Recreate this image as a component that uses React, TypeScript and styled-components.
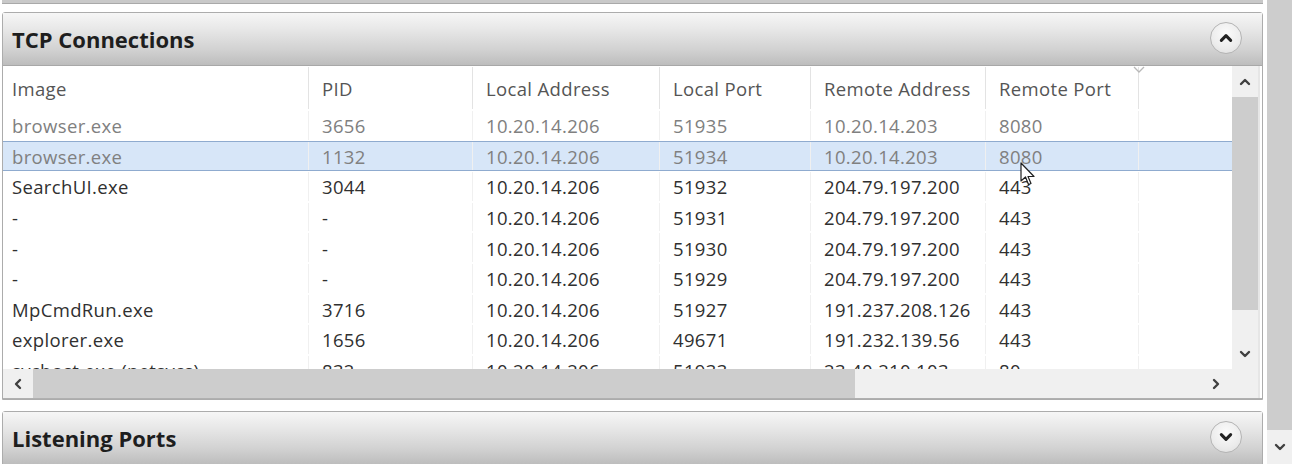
import React, { FC } from 'react';
import styled, { createGlobalStyle } from 'styled-components';

const GlobalStyle = createGlobalStyle`
  html, body {
    margin: 0;
    padding: 0;
    background: #ffffff;
  }
  body {
    font-family: "Open Sans", "Noto Sans", "Liberation Sans", sans-serif;
    overflow: hidden;
  }
`;

type Row = {
  image: string;
  pid: string;
  localAddress: string;
  localPort: string;
  remoteAddress: string;
  remotePort: string;
  dim?: boolean;
  selected?: boolean;
};

const columns = ['Image', 'PID', 'Local Address', 'Local Port', 'Remote Address', 'Remote Port'];

const rows: Row[] = [
  { image: 'browser.exe', pid: '3656', localAddress: '10.20.14.206', localPort: '51935', remoteAddress: '10.20.14.203', remotePort: '8080', dim: true },
  { image: 'browser.exe', pid: '1132', localAddress: '10.20.14.206', localPort: '51934', remoteAddress: '10.20.14.203', remotePort: '8080', dim: true, selected: true },
  { image: 'SearchUI.exe', pid: '3044', localAddress: '10.20.14.206', localPort: '51932', remoteAddress: '204.79.197.200', remotePort: '443' },
  { image: '-', pid: '-', localAddress: '10.20.14.206', localPort: '51931', remoteAddress: '204.79.197.200', remotePort: '443' },
  { image: '-', pid: '-', localAddress: '10.20.14.206', localPort: '51930', remoteAddress: '204.79.197.200', remotePort: '443' },
  { image: '-', pid: '-', localAddress: '10.20.14.206', localPort: '51929', remoteAddress: '204.79.197.200', remotePort: '443' },
  { image: 'MpCmdRun.exe', pid: '3716', localAddress: '10.20.14.206', localPort: '51927', remoteAddress: '191.237.208.126', remotePort: '443' },
  { image: 'explorer.exe', pid: '1656', localAddress: '10.20.14.206', localPort: '49671', remoteAddress: '191.232.139.56', remotePort: '443' },
  { image: 'svchost.exe (netsvcs)', pid: '832', localAddress: '10.20.14.206', localPort: '51933', remoteAddress: '23.40.210.103', remotePort: '80' },
];

const GRID = '306px 164px 187px 151px 175px 153px 1fr';

const Page = styled.div`
  display: flex;
  width: 1292px;
  height: 464px;
  overflow: hidden;
  background: #ffffff;
`;

const Main = styled.div`
  display: flex;
  flex-direction: column;
  width: 1263px;
  padding-left: 2px;
  box-sizing: border-box;
`;

const PrevPanelEdge = styled.div`
  height: 3px;
  background: #c9c9c9;
  border-bottom: 1px solid #a9a9a9;
  flex-shrink: 0;
`;

const Panel = styled.section<{ $gap: number }>`
  margin-top: ${(p) => p.$gap}px;
  border: 1px solid #acacac;
  border-radius: 3px 3px 0 0;
  display: flex;
  flex-direction: column;
  flex-shrink: 0;
  background: #ffffff;
`;

const PanelHeader = styled.div`
  height: 53px;
  display: flex;
  align-items: center;
  justify-content: space-between;
  padding: 0 20px 0 9px;
  background: linear-gradient(#f6f6f6 0%, #e8e8e8 30%, #d2d2d2 70%, #bdbdbd 100%);
  border-bottom: 1px solid #a8a8a8;
  box-sizing: border-box;
`;

const Title = styled.h2`
  margin: 0;
  font-size: 22px;
  font-weight: 700;
  color: #1e1e1e;
  letter-spacing: 0;
`;

const CircleButton = styled.button`
  width: 32px;
  height: 32px;
  border-radius: 50%;
  border: 1px solid #b4b4b4;
  background: radial-gradient(circle at 50% 35%, #fbfbfb 0%, #ececec 60%, #dcdcdc 100%);
  display: flex;
  align-items: center;
  justify-content: center;
  padding: 0;
  margin-top: -2px;
`;

const TableArea = styled.div`
  display: grid;
  grid-template-columns: 1229px 28px;
  grid-template-rows: 303px 29px;
  border-bottom: 1px solid #b0b0b0;
`;

const Viewport = styled.div`
  position: relative;
  overflow: hidden;
`;

const GridRow = styled.div<{ $selected?: boolean; $header?: boolean }>`
  display: grid;
  grid-template-columns: ${GRID};
  height: ${(p) => (p.$header ? '44px' : '30.6px')};
  box-sizing: border-box;
  background: ${(p) => (p.$selected ? '#d7e6f8' : 'transparent')};
  border-top: 1px solid ${(p) => (p.$selected ? '#8fabcf' : 'transparent')};
  border-bottom: 1px solid ${(p) => (p.$selected ? '#8fabcf' : 'transparent')};
`;

const Cell = styled.div<{ $dim?: boolean; $header?: boolean }>`
  display: flex;
  align-items: center;
  padding-left: 13px;
  font-size: 18.5px;
  letter-spacing: 0.35px;
  white-space: nowrap;
  overflow: hidden;
  color: ${(p) => (p.$header ? '#555555' : p.$dim ? '#808080' : '#303030')};
  border-right: 1px solid ${(p) => (p.$header ? '#e3e3e3' : '#f0f0f0')};
  padding-top: ${(p) => (p.$header ? '0' : '1px')};
  &:first-child {
    padding-left: 9px;
  }
  &:last-child {
    border-right: none;
  }
`;

const SortMark = styled.svg`
  position: absolute;
  left: 1130px;
  top: 0;
`;

const Cursor = styled.svg`
  position: absolute;
  left: 1017px;
  top: 96px;
`;

const VScroll = styled.div`
  display: flex;
  flex-direction: column;
  background: #f0f0f0;
  border-right: 2px solid #e6e6e6;
`;

const ScrollButton = styled.div<{ $w?: number; $h?: number }>`
  width: ${(p) => (p.$w ? `${p.$w}px` : 'auto')};
  height: ${(p) => (p.$h ? `${p.$h}px` : 'auto')};
  display: flex;
  align-items: center;
  justify-content: center;
  flex-shrink: 0;
  background: #f0f0f0;
`;

const VThumb = styled.div`
  height: 213px;
  background: #cdcdcd;
  flex-shrink: 0;
`;

const Track = styled.div`
  flex: 1;
`;

const HScroll = styled.div`
  display: flex;
  background: #f0f0f0;
`;

const HThumb = styled.div`
  width: 822px;
  background: #cdcdcd;
  flex-shrink: 0;
`;

const Corner = styled.div`
  background: #f0f0f0;
  border-right: 2px solid #e6e6e6;
`;

const OuterScroll = styled.div`
  margin-left: 4px;
  flex: 1;
  display: flex;
  flex-direction: column;
  background: #cdcdcd;
`;

const OuterTrack = styled.div`
  flex: 1;
`;

const OuterButton = styled.div`
  height: 34px;
  display: flex;
  align-items: center;
  justify-content: center;
  background: #f0f0f0;
`;

type Dir = 'up' | 'down' | 'left' | 'right';

const chevronPath: Record<Dir, string> = {
  up: 'M2 8 L6 4 L10 8',
  down: 'M2 4 L6 8 L10 4',
  left: 'M8 2 L4 6 L8 10',
  right: 'M4 2 L8 6 L4 10',
};

const Chevron: FC<{ dir: Dir; size?: number; color?: string; weight?: number }> = ({
  dir,
  size = 12,
  color = '#404040',
  weight = 2.4,
}) => (
  <svg width={size} height={size} viewBox="0 0 12 12">
    <path d={chevronPath[dir]} fill="none" stroke={color} strokeWidth={weight} strokeLinecap="round" strokeLinejoin="round" />
  </svg>
);

const App: FC = () => {
  return (
    <Page>
      <GlobalStyle />
      <Main>
        <PrevPanelEdge />
        <Panel $gap={8}>
          <PanelHeader>
            <Title>TCP Connections</Title>
            <CircleButton>
              <Chevron dir="up" size={14} color="#222" weight={2.6} />
            </CircleButton>
          </PanelHeader>
          <TableArea>
            <Viewport>
              <GridRow $header>
                {columns.map((c) => (
                  <Cell key={c} $header>
                    {c}
                  </Cell>
                ))}
                <Cell $header />
              </GridRow>
              {rows.map((r, i) => (
                <GridRow key={i} $selected={r.selected}>
                  <Cell $dim={r.dim}>{r.image}</Cell>
                  <Cell $dim={r.dim}>{r.pid}</Cell>
                  <Cell $dim={r.dim}>{r.localAddress}</Cell>
                  <Cell $dim={r.dim}>{r.localPort}</Cell>
                  <Cell $dim={r.dim}>{r.remoteAddress}</Cell>
                  <Cell $dim={r.dim}>{r.remotePort}</Cell>
                  <Cell />
                </GridRow>
              ))}
              <SortMark width="12" height="8" viewBox="0 0 12 8">
                <path d="M1 1 L6 6 L11 1" fill="none" stroke="#b8b8b8" strokeWidth="1.3" />
              </SortMark>
              <Cursor width="16" height="26" viewBox="0 0 16 26">
                <path
                  d="M1 1 L1 19 L5.5 15 L8.5 22.5 L11 21.5 L8 14.5 L14 14.5 Z"
                  fill="#ffffff"
                  stroke="#202020"
                  strokeWidth="1.2"
                  strokeLinejoin="round"
                />
              </Cursor>
            </Viewport>
            <VScroll>
              <ScrollButton $h={31}>
                <Chevron dir="up" />
              </ScrollButton>
              <VThumb />
              <Track />
              <ScrollButton $h={31}>
                <Chevron dir="down" />
              </ScrollButton>
            </VScroll>
            <HScroll>
              <ScrollButton $w={30}>
                <Chevron dir="left" />
              </ScrollButton>
              <HThumb />
              <Track />
              <ScrollButton $w={33}>
                <Chevron dir="right" />
              </ScrollButton>
            </HScroll>
            <Corner />
          </TableArea>
        </Panel>
        <Panel $gap={11}>
          <PanelHeader>
            <Title>Listening Ports</Title>
            <CircleButton>
              <Chevron dir="down" size={14} color="#222" weight={2.6} />
            </CircleButton>
          </PanelHeader>
        </Panel>
      </Main>
      <OuterScroll>
        <OuterTrack />
        <OuterButton>
          <Chevron dir="down" />
        </OuterButton>
      </OuterScroll>
    </Page>
  );
};

export default App;
